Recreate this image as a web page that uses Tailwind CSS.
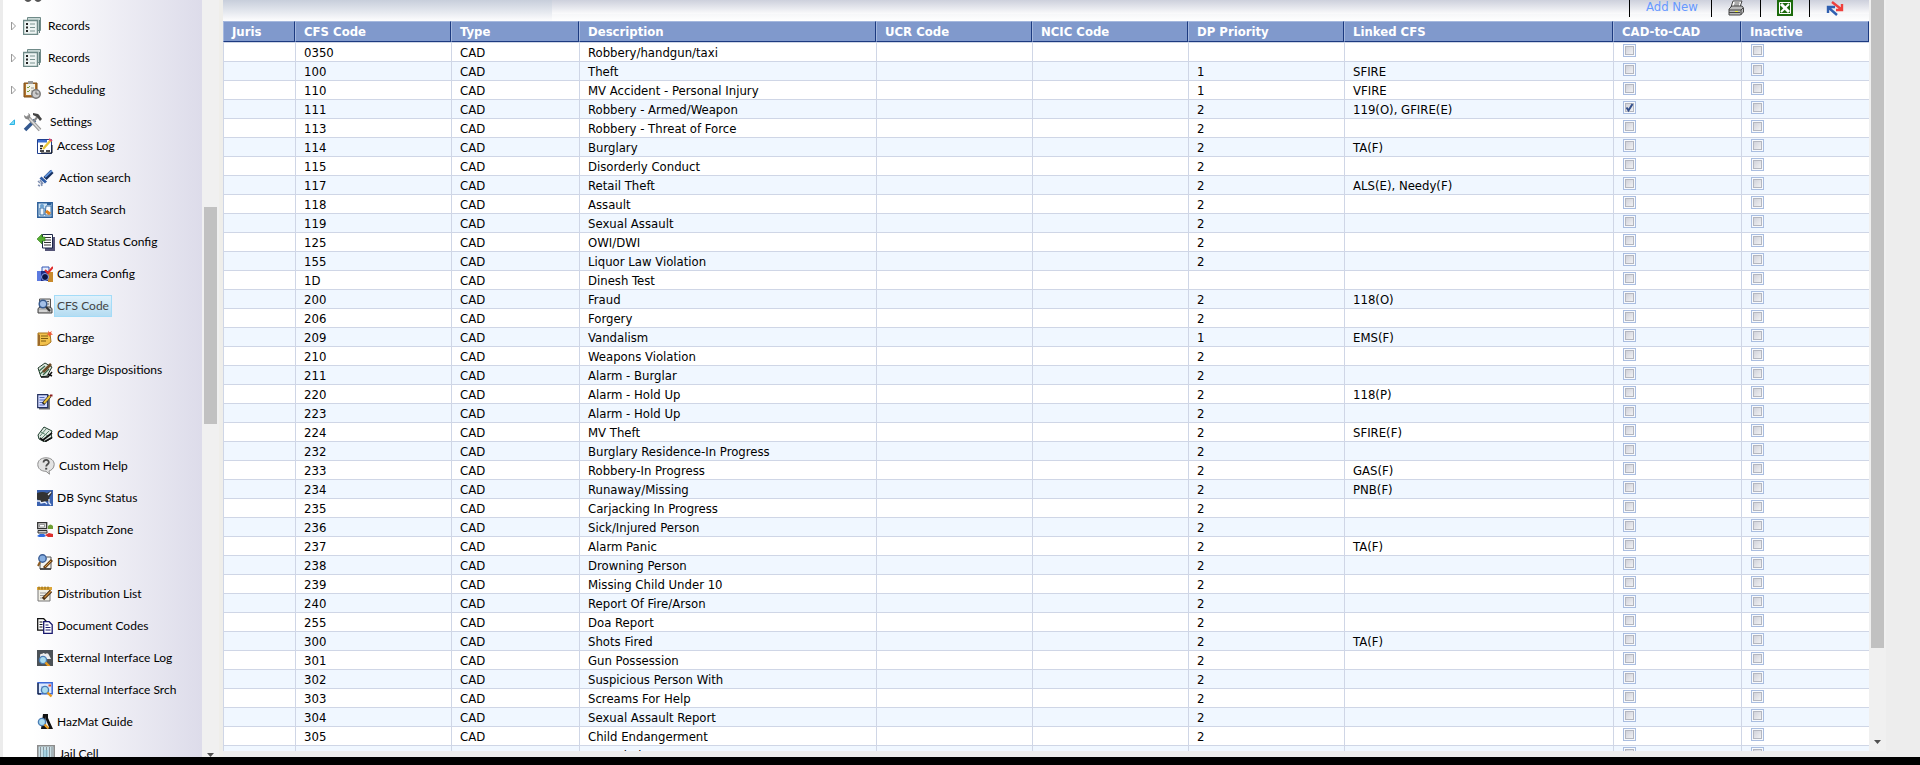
<!DOCTYPE html>
<html lang="en">
<head>
<meta charset="utf-8">
<title>CFS Code</title>
<script src="https://cdn.jsdelivr.net/npm/@tailwindcss/browser@4"></script>
</head>
<body class="h-screen overflow-hidden bg-[#ededed] flex flex-col text-[13px] text-black">
<div class="flex flex-1 min-h-0">

  <nav aria-label="Modules" class="w-[202px] shrink-0 border-l-3 border-[#ececec] overflow-hidden bg-linear-to-r from-white from-15% to-[#dddcea] font-['Lato',sans-serif] text-xs">
    <div class="h-2.5 pl-5 flex items-start">
      <svg class="w-5 h-2.5" viewBox="0 0 20 10" fill="none" stroke="#555" stroke-width="2"><path d="M2 -1q3 4 6 0M12 -1q3 4 6 0"/></svg>
    </div>
    <ul id="tree"></ul>
  </nav>

  <div class="w-[17px] shrink-0 bg-[#f0f0f0] flex flex-col items-center">
    <div class="h-[207px] shrink-0"></div>
    <div class="w-[13px] h-[217px] shrink-0 bg-[#c1c1c1]"></div>
    <div class="flex-1"></div>
    <svg class="w-[7px] h-1 shrink-0" viewBox="0 0 7 4" fill="#505050"><path d="M0 0h7L3.500 4z"/></svg>
  </div>

  <div class="w-1 shrink-0 bg-[#efeeea]"></div>

  <main class="flex-1 min-w-0 flex flex-col overflow-hidden mb-1.5 font-['DejaVu_Sans_Condensed','DejaVu_Sans',sans-serif]">
    <header class="h-[21px] shrink-0 flex bg-linear-to-b from-[#c7cedb] to-[#fdfdfe]">
      <div class="w-[329px] shrink-0"></div>
      <div class="flex-1 bg-linear-to-b from-[#e4e6ec] to-white">
        <div class="h-3.5 bg-linear-to-b from-[#cdd0dc] to-[#fbfbfc] flex justify-end">
          <div class="flex h-4.5 -mt-px items-center">
            <div class="w-[82px] h-full border-l border-black pl-4 pb-1"><a href="#add" class="block whitespace-nowrap leading-4 text-[#6699ff]">Add New</a></div>
            <button aria-label="Print" class="w-[49px] h-full border-l border-black pl-4">
              <svg class="w-4 h-4" viewBox="0 0 16 16"><path d="M5 1h9l-2 6H3z" fill="#fff" stroke="#444"/><path d="M6.500 3h5M6 5h5" stroke="#555"/><path d="M1 9l3-3h10l1.500 2v4l-3 3H1z" fill="#bbb" stroke="#444"/><path d="M1 10h12l2-2M13 10v5M1 12.500h11" stroke="#444" fill="none"/><path d="M7 11.500h3" stroke="#ee3"/></svg>
            </button>
            <button aria-label="Export to Excel" class="w-[49px] h-full border-l border-black pl-4">
              <svg class="w-4 h-4" viewBox="0 0 16 16"><path d="M0 0h16v16H0z" fill="#1c6b0c"/><path d="M2.500 2.500h11v11h-11z" fill="#1c6b0c" stroke="#fff"/><path d="M4 4l8 8" stroke="#fff" stroke-width="3"/><path d="M12 4l-8 8" stroke="#fff" stroke-width="2"/></svg>
            </button>
            <button aria-label="Refresh" class="w-[60px] h-full border-l border-black pl-4">
              <svg class="w-[18px] h-4" viewBox="0 0 18 16" fill="none" stroke-width="2.400"><path d="M6 2l9 7M16 4v6h-6" stroke="#f0403c"/><path d="M11 15L3 8M2 13V7h7" stroke="#2f5fb0"/></svg>
            </button>
          </div>
        </div>
      </div>
    </header>

    <table class="w-full table-fixed border-separate border-spacing-0">
      <colgroup>
        <col class="w-[72px]"><col class="w-[156px]"><col class="w-32"><col><col class="w-[156px]"><col class="w-[156px]"><col class="w-[156px]"><col class="w-[269px]"><col class="w-32"><col class="w-32">
      </colgroup>
      <thead><tr id="head"></tr></thead>
      <tbody id="rows"></tbody>
    </table>
  </main>

  <div class="w-[17px] shrink-0 bg-[#f0f0f0] flex flex-col items-center mb-1.5">
    <div class="w-[13px] h-[648px] shrink-0 bg-[#c1c1c1]"></div>
    <div class="flex-1"></div>
    <svg class="w-[7px] h-1 shrink-0 mb-[7px]" viewBox="0 0 7 4" fill="#505050"><path d="M0 0h7L3.500 4z"/></svg>
  </div>
  <div class="w-[34px] shrink-0"></div>
</div>
<footer class="h-2 shrink-0 bg-black"></footer>

<script>
const glass = (x, y) => `<circle cx="${x}" cy="${y}" r="3.6" fill="#a9dcf0" stroke="#4a7db5" stroke-width="1.400"/><path d="M${x + 2.500} ${y + 2.500}l4 4" stroke="#e89a1c" stroke-width="2.400"/>`;
const art = {
  records: '<path d="M4.500 .5h13v13h-13z" fill="#c9d8d6" stroke="#6f8a88"/><path d="M.5 3.500h14v14H.5z" fill="#eef4f3" stroke="#6f8a88" stroke-width="1.500"/><path d="M3 7h2M3 10.500h2M3 14h2" stroke="#222" stroke-width="2"/><path d="M7 7h5M7 10.500h5M7 14h5" stroke="#7c9492" stroke-width="1.200"/><path d="M16.500 3v13" stroke="#5f7d7b"/>',
  sched: '<path d="M1 2h13v14H1z" fill="#b0732c" stroke="#7c4c17"/><path d="M3 3h9v11H3z" fill="#f3f3e8"/><path d="M5 0h5v3H5z" fill="#999"/><path d="M4 6l1 1 2-2M4 10l1 1 2-2" stroke="#7a9a3a" fill="none"/><path d="M8 7h3M8 10h2" stroke="#999"/><circle cx="13" cy="13" r="4.200" fill="#ccc" stroke="#777" stroke-width="1.500"/><path d="M13 10.500V13h2.500" stroke="#666" fill="none"/>',
  tools: '<path d="M2 18l10-10" stroke="#33588f" stroke-width="3.500"/><path d="M11 9l5-6" stroke="#888" stroke-width="2"/><path d="M10 1l5 1 4 5-2 2-3-4-4-2z" fill="#444"/><path d="M4 4l13 14" stroke="#999" stroke-width="3.600"/><path d="M5 5l12 13" stroke="#ddd" stroke-width="1.400"/><path d="M1 3q0 5 5 4l1-2q1-3-2-4l1 3-2 1z" fill="#888"/>',
  access: '<path d="M.5 1.500h14v14H.5z" fill="#fff" stroke="#1f3f8f"/><path d="M1 2h9v2.500H1z" fill="#3c6fd0"/><path d="M3 8h3M3 10.500h2M3 13h4M9 13h4" stroke="#111" stroke-width="1.300"/><path d="M6 11l8-9" stroke="#e8c53a" stroke-width="2.400"/><path d="M12 1l3 2" stroke="#e0476a" stroke-width="2"/><path d="M15 7v8H4" stroke="#111" fill="none"/>',
  action: '<path d="M8 9.500l7-7" stroke="#16305f" stroke-width="4.500"/><path d="M8 8l7-6.500" stroke="#5c8fd8" stroke-width="1.800"/><path d="M4.500 7.500l5.500 5-2 2-5.500-5z" fill="#2e5da8"/><path d="M1 12l2 2M4 14l1 3M1 16l2 1M3 11l3 4" stroke="#7f8fb0" stroke-width="1.500"/>',
  batch: '<path d="M.8 .8h14.400v14.400H.8z" fill="#cfe4f4" stroke="#2c5f99" stroke-width="1.500"/><path d="M3 6h4v7H3z" fill="#eef6fc" stroke="#3a6ea5"/><path d="M9 4h5v9H8z" fill="#fff" stroke="#3a6ea5"/><circle cx="5" cy="4" r="2" fill="#6aa0cf"/><path d="M9 9l4 3" stroke="#e0821c" stroke-width="3"/><path d="M10 2h4" stroke="#2c5f99" stroke-width="2"/>',
  cad: '<path d="M8 4h10v14H8z" fill="#555577"/><path d="M5.500 1.500h10v13.500h-10z" fill="#fff" stroke="#1c2648"/><path d="M7 4.500h7M7 7h7M7 9.500h7M7 12h7" stroke="#333"/><path d="M0 6l5-5v3h3v4H5v3z" fill="#55ad31" stroke="#2d7a16" stroke-width=".6"/>',
  camera: '<path d="M5 1h7v6H5z" fill="#e6f0ff" stroke="#3556b5"/><path d="M0 5h11v10H0z" fill="#1c2c86"/><path d="M0 5h4v10H0z" fill="#5c7ae0"/><path d="M11 6h5v10h-5z" fill="#c98a2c"/><circle cx="8" cy="11" r="3.500" fill="#0b1444" stroke="#8fa4ee"/><path d="M8 4l3 3 5-6" stroke="#e02a2a" stroke-width="2" fill="none"/>',
  cfs: '<path d="M2.500 1h11v11h-11z" fill="#ddd" stroke="#555"/><path d="M1 10.500l2-1.500h10l2 1.500v4.500H1z" fill="#b5b5b5" stroke="#444"/><circle cx="6" cy="6" r="3.800" fill="#a4c0e8" stroke="#375a8f" stroke-width="1.500"/><path d="M9 9l4 4" stroke="#333" stroke-width="2"/><path d="M2 13h8" stroke="#eee"/><path d="M10 3.500h2M10.500 6h1.500" stroke="#666"/>',
  charge: '<path d="M1 3h12l1 9-4 3-9 1z" fill="#f2c14b" stroke="#a8741c"/><path d="M1 4l2 1v10l-2 1z" fill="#9c6a2a"/><path d="M4 6h7M4 8.500h7M4 11h5" stroke="#7c5a10"/><path d="M11 .5l1.500 2L15 1l-1 2 2 1.500-2.500.5-1 2-1-2-2-.5 2-1z" fill="#ee5a38"/>',
  chargeD: '<path d="M1 6l7-5 7 4-5 9-6 1z" fill="#dfe8df" stroke="#243b2c"/><path d="M2 9l6-5M3 12l7-6M6 13l6-6" stroke="#3b6b4e" stroke-width="1.300"/><path d="M6 10l8-8" stroke="#6b4a26" stroke-width="2.600"/><path d="M4 15h7l4-5M11 12l4 2" stroke="#111" stroke-width="1.500" fill="none"/>',
  coded: '<path d="M2 2h11v13.500H2z" fill="#777"/><path d="M.7 .7h10v13H.7z" fill="#d4dcff" stroke="#23305f" stroke-width="1.200"/><path d="M2.500 3.500h5M2.500 6h6M2.500 8.500h4M2.500 11h5" stroke="#5469b8"/><path d="M6 10l7-8" stroke="#222" stroke-width="3.400"/><path d="M7 9l6-7" stroke="#e8bf3a" stroke-width="2"/><path d="M13 1.500h2.500" stroke="#8c1c1c" stroke-width="2"/>',
  map: '<path d="M1 9l6-8 8 4-1 3 1 4-7 4-6-3z" fill="#dfe9e2" stroke="#1c3b2b"/><path d="M3 10l6-7M5 12l7-7M4 6l7 4" stroke="#58806a"/><path d="M6 14l9-7M8 15.500l7-4M3 12l4 3" stroke="#111" stroke-width="1.600"/>',
  help: '<path d="M9 .8c5 0 8.200 2.800 8.200 6.700S14 13.500 12 14l.5 3.200L9 14.300C4 14.300 .8 11.500 .8 7.500S4 .8 9 .8z" fill="#e3e3e3" stroke="#8c8c8c"/><path d="M6.500 5.500c0-3.500 5.500-3.300 5.300 0C11.700 7.300 9.200 7.300 9.200 9.600" fill="none" stroke="#4a4a4a" stroke-width="1.800"/><path d="M8.200 10.800h2v1.800h-2z" fill="#4a4a4a"/>',
  db: '<path d="M0 0h16v16H0z" fill="#3b62b0"/><path d="M0 3q6-2 10 0l4-2 1 2-3 5 1 4-3-1-2 1H3L0 9z" fill="#333"/><path d="M0 11h3l1 2 4-1 2 2M12 9v4l2 2M11 5l3-3" stroke="#e8eefb" stroke-width="1.300" fill="none"/>',
  zone: '<path d="M.7 .7h9v6h-9z" fill="#ddd" stroke="#333" stroke-width="1.300"/><path d="M2.500 2.500h5v2.500h-5z" fill="#fff" stroke="#777" stroke-width=".7"/><path d="M1 8.500h9v2.500H1z" fill="#ccc" stroke="#333"/><path d="M11 4q2.500-3 5 0v3h-5z" fill="#6e9e34"/><path d="M0 14l3-2h4l2 2-2 1H2z" fill="#2e6be0"/><path d="M8 13l4-2 4 1v3h-5z" fill="#dd2e2e"/>',
  disp: '<path d="M3 3h11v12H3z" fill="#f4f4f0" stroke="#555"/><path d="M7 14l8-8" stroke="#6b4218" stroke-width="3"/><path d="M8 13l6-6" stroke="#d9a04a"/><circle cx="5.500" cy="4.500" r="3.700" fill="#86aee0" stroke="#3c5f96" stroke-width="1.400"/><path d="M3 8l-2 4" stroke="#8a5a20" stroke-width="2"/><path d="M3 15h11" stroke="#333" stroke-width="1.500"/>',
  dist: '<path d="M1 2h12v13H1z" fill="#f2f0e6" stroke="#777"/><path d="M0 1h15v3H0z" fill="#dba63a"/><path d="M2 .5v3M5 .5v3M8 .5v3M11 .5v3" stroke="#8a6414"/><path d="M3 7h6M3 9.500h5M3 12h4" stroke="#999"/><path d="M6 13l8-8" stroke="#4a2f12" stroke-width="3.200"/><path d="M7.500 11.500L14 5" stroke="#d08e3c" stroke-width="1.300"/>',
  docs: '<path d="M.7 .7h6l2.500 2.500v9H.7z" fill="#fff" stroke="#111" stroke-width="1.300"/><path d="M2.500 4h3M2.500 6.500h3M2.500 9h3" stroke="#111"/><path d="M6.700 3.700h5.500l3 3v8.600H6.700z" fill="#fff" stroke="#19196e" stroke-width="1.300"/><path d="M8.500 7h3M8.500 9.500h5M8.500 12h5" stroke="#19196e"/>',
  extLog: '<path d="M0 0h16v16H0z" fill="#4c5257"/><path d="M3 6q0-3 2-2 2-2 3 0 3-2 4 1l2 4H3z" fill="#eee"/>' + glass(6, 10),
  extSrch: '<path d="M1 .8h14.200v11H1z" fill="#dbe9ff" stroke="#3c68d8" stroke-width="1.500"/><path d="M1 1v11h3" stroke="#111" fill="none"/><path d="M11.500 2.500h2.500v2h-2.500z" fill="#e04a2a"/><path d="M4 5h3" stroke="#7ca0e8"/>' + glass(8, 8),
  haz: '<path d="M6 0h5v4l5 11H4z" fill="#111"/><path d="M9 2v4l3 7H8z" fill="#eee"/>' + glass(5, 8),
  jail: '<path d="M.8 .8h16.400v16.400H.8z" fill="#cfe6ee" stroke="#8c8c8c" stroke-width="1.600"/><path d="M3.500 2v15M6.500 2v15M9.500 2v15M12.500 2v15M15 2v15" stroke="#8a9499" stroke-width="1.200"/><path d="M6 5h5v10H6z" fill="#7fc4dc" opacity=".5"/>'
};
const parents = [['records', 'Records', 18], ['records', 'Records', 18], ['sched', 'Scheduling', 18]];
const kids = [['access', 'Access Log'], ['action', 'Action search', 18], ['batch', 'Batch Search'], ['cad', 'CAD Status Config', 18], ['camera', 'Camera Config'], ['cfs', 'CFS Code'], ['charge', 'Charge'], ['chargeD', 'Charge Dispositions'], ['coded', 'Coded'], ['map', 'Coded Map'], ['help', 'Custom Help', 18], ['db', 'DB Sync Status'], ['zone', 'Dispatch Zone'], ['disp', 'Disposition'], ['dist', 'Distribution List'], ['docs', 'Document Codes'], ['extLog', 'External Interface Log'], ['extSrch', 'External Interface Srch'], ['haz', 'HazMat Guide'], ['jail', 'Jail Cell', 18]];
const icon = (n, s) => `<svg class="${s === 20 ? 'size-5' : s === 18 ? 'size-4.5' : 'size-4'} shrink-0" viewBox="0 0 ${s} ${s}">${art[n]}</svg>`;
const closed = '<svg class="w-[5px] h-2.5 shrink-0" viewBox="0 0 5 10" fill="#fff" stroke="#999"><path d="M.5 1v8l4-4z"/></svg>';
const open = '<svg class="w-1.5 h-1.5 shrink-0" viewBox="0 0 6 6" fill="#7fdcf8" stroke="#2cb4e4"><path d="M5.500 .8v4.700H.8z"/></svg>';
document.getElementById('tree').innerHTML =
  parents.map(([i, t, s]) => `<li class="h-8 pl-2 flex items-center">${closed}<a href="#" class="flex items-center gap-[7px] pl-[7px] whitespace-nowrap">${icon(i, s)}<span>${t}</span></a></li>`).join('') +
  `<li><div class="h-6 pt-2 pl-1.5 flex items-center">${open}<a href="#" class="flex items-center gap-[7px] pl-2 whitespace-nowrap">${icon('tools', 20)}<span>Settings</span></a></div><ul>` +
  kids.map(([i, t, s = 16]) => `<li class="h-8 pl-[34px] flex items-center"><a href="#" class="flex items-center gap-px whitespace-nowrap">${icon(i, s)}<span class="${t === 'CFS Code' ? 'h-[22px] px-0.5 leading-5 border border-[#a4dcf8] bg-linear-to-b from-[#e0f1fb] to-[#b4dcf2] text-[#444]' : 'h-[22px] px-0.5 leading-5 border border-transparent'}">${t}</span></a></li>`).join('') + '</ul></li>';

const heads = ['Juris', 'CFS Code', 'Type', 'Description', 'UCR Code', 'NCIC Code', 'DP Priority', 'Linked CFS', 'CAD-to-CAD', 'Inactive'];
document.getElementById('head').innerHTML = heads.map(h => `<th scope="col" class="h-[22px] p-0 border-b border-[#cfd6e6]"><div class="h-[21px] pl-2 leading-[19px] text-left font-bold text-white whitespace-nowrap bg-[#8099cc] border border-t-[#a5b8de] border-l-[#a5b8de] border-r-[#1c3a80] border-b-[#1c3a80]">${h}</div></th>`).join('');

const data = `0350|Robbery/handgun/taxi||
100|Theft|1|SFIRE
110|MV Accident - Personal Injury|1|VFIRE
111|Robbery - Armed/Weapon|2|119(O), GFIRE(E)
113|Robbery - Threat of Force|2|
114|Burglary|2|TA(F)
115|Disorderly Conduct|2|
117|Retail Theft|2|ALS(E), Needy(F)
118|Assault|2|
119|Sexual Assault|2|
125|OWI/DWI|2|
155|Liquor Law Violation|2|
1D|Dinesh Test||
200|Fraud|2|118(O)
206|Forgery|2|
209|Vandalism|1|EMS(F)
210|Weapons Violation|2|
211|Alarm - Burglar|2|
220|Alarm - Hold Up|2|118(P)
223|Alarm - Hold Up|2|
224|MV Theft|2|SFIRE(F)
232|Burglary Residence-In Progress|2|
233|Robbery-In Progress|2|GAS(F)
234|Runaway/Missing|2|PNB(F)
235|Carjacking In Progress|2|
236|Sick/Injured Person|2|
237|Alarm Panic|2|TA(F)
238|Drowning Person|2|
239|Missing Child Under 10|2|
240|Report Of Fire/Arson|2|
255|Doa Report|2|
300|Shots Fired|2|TA(F)
301|Gun Possession|2|
302|Suspicious Person With|2|
303|Screams For Help|2|
304|Sexual Assault Report|2|
305|Child Endangerment|2|
306|Stranded|2|`.split('\n').map(r => r.split('|'));
const box = (label, on) => `<label class="grid size-[13px] mt-px"><input type="checkbox" aria-label="${label}" ${on ? 'checked' : ''} class="[grid-area:1/1] appearance-none size-[13px] border border-[#a9bde0] bg-linear-to-br from-[#c8cad4] to-[#fafafa] shadow-[inset_0_0_0_1px_#f8fafd,inset_0_0_0_2px_#b4b7c0]">${on ? '<svg class="[grid-area:1/1] size-[13px] pointer-events-none" viewBox="0 0 13 13" fill="none" stroke="#34508c" stroke-width="2"><path d="M3.500 6.500l2 3 4-6.500"/></svg>' : ''}</label>`;
document.getElementById('rows').innerHTML = data.map(([c, d, p, l]) =>
  '<tr class="odd:bg-white even:bg-[#f0f7ff]">' + ['', c, 'CAD', d, '', '', p, l].map(v => `<td class="h-[19px] p-0 pl-2 pt-0.5 leading-4 whitespace-nowrap border-l border-b border-[#cfd6e6]">${v}</td>`).join('') +
  ['CAD-to-CAD', 'Inactive'].map(n => `<td class="h-[19px] p-0 pl-[9px] align-top border-l border-b border-[#cfd6e6]">${box(n + ' ' + c, c === '111' && n === 'CAD-to-CAD')}</td>`).join('') + '</tr>').join('');
</script>
</body>
</html>
